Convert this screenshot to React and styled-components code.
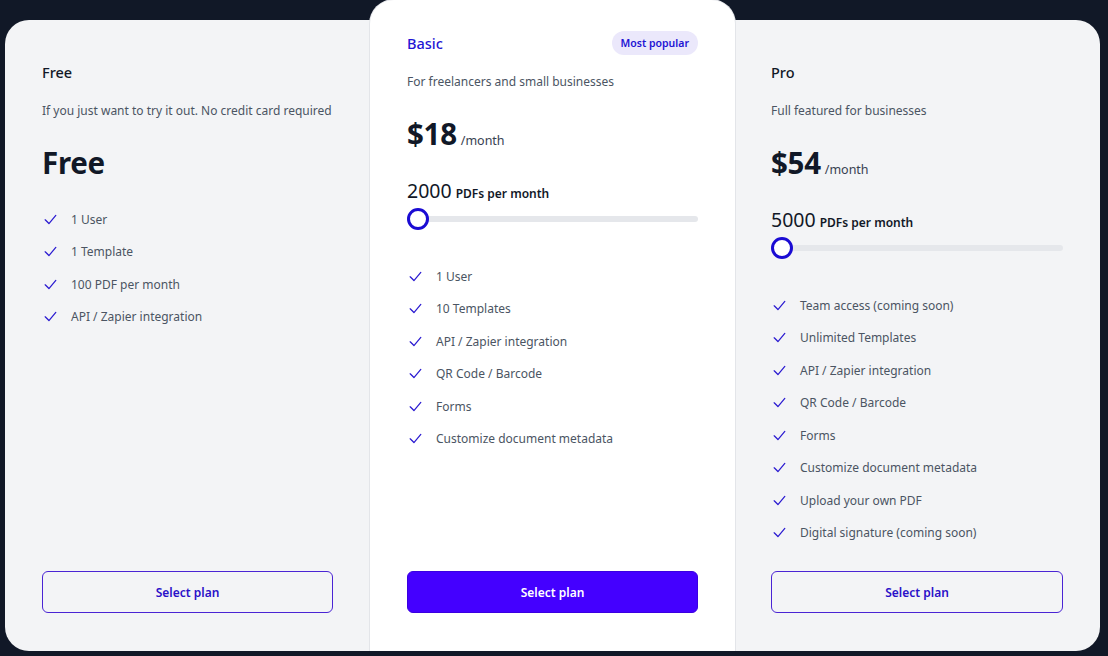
import React from 'react'
import styled, { createGlobalStyle } from 'styled-components'

const GlobalStyle = createGlobalStyle`
  html, body {
    margin: 0;
    padding: 0;
    background: #111827;
  }
  body {
    font-family: "Noto Sans", "Open Sans", sans-serif;
    -webkit-font-smoothing: antialiased;
  }
`

const plans = [
  {
    name: 'Free',
    desc: 'If you just want to try it out. No credit card required',
    price: 'Free',
    features: ['1 User', '1 Template', '100 PDF per month', 'API / Zapier integration'],
  },
  {
    name: 'Basic',
    desc: 'For freelancers and small businesses',
    price: '$18',
    pdfs: 2000,
    popular: true,
    features: [
      '1 User',
      '10 Templates',
      'API / Zapier integration',
      'QR Code / Barcode',
      'Forms',
      'Customize document metadata',
    ],
  },
  {
    name: 'Pro',
    desc: 'Full featured for businesses',
    price: '$54',
    pdfs: 5000,
    features: [
      'Team access (coming soon)',
      'Unlimited Templates',
      'API / Zapier integration',
      'QR Code / Barcode',
      'Forms',
      'Customize document metadata',
      'Upload your own PDF',
      'Digital signature (coming soon)',
    ],
  },
]

const CheckIcon = () => (
  <svg width="15" height="15" viewBox="0 0 24 24" fill="none" stroke="#2b1bd1" strokeWidth="2" strokeLinecap="round" strokeLinejoin="round">
    <path d="M3.5 12.5l6 6 11-13" />
  </svg>
)

const App = () => {
  return (
    <>
      <GlobalStyle />
      <Page>
        {plans.map((plan, i) => (
          <Card key={plan.name} $pos={i}>
            <Header>
              <Title $popular={plan.popular}>{plan.name}</Title>
              {plan.popular && <Badge>Most popular</Badge>}
            </Header>
            <Desc>{plan.desc}</Desc>
            <PriceRow>
              <Price>{plan.price}</Price>
              {plan.pdfs && <Per>/month</Per>}
            </PriceRow>
            {plan.pdfs && (
              <>
                <PdfRow>
                  <PdfCount>{plan.pdfs}</PdfCount>
                  <PdfLabel>PDFs per month</PdfLabel>
                </PdfRow>
                <Slider>
                  <Track />
                  <Thumb />
                </Slider>
              </>
            )}
            <Features $slider={!!plan.pdfs}>
              {plan.features.map((f) => (
                <Feature key={f}>
                  <CheckIcon />
                  <span>{f}</span>
                </Feature>
              ))}
            </Features>
            <SelectButton $primary={plan.popular}>Select plan</SelectButton>
          </Card>
        ))}
      </Page>
    </>
  )
}

const Page = styled.div`
  display: grid;
  grid-template-columns: repeat(3, 365px);
  height: 651px;
  padding-left: 5px;
  box-sizing: border-box;
`

const Card = styled.div`
  display: flex;
  flex-direction: column;
  box-sizing: border-box;
  background: ${({ $pos }) => ($pos === 1 ? '#ffffff' : '#f3f4f6')};
  margin-top: ${({ $pos }) => ($pos === 1 ? '0' : '20px')};
  padding: ${({ $pos }) => ($pos === 1 ? '31px' : '40px')} 37px 38px;
  border-radius: ${({ $pos }) =>
    $pos === 0 ? '24px 0 0 24px' : $pos === 1 ? '24px 24px 0 0' : '0 24px 24px 0'};
  box-shadow: ${({ $pos }) => ($pos === 1 ? '0 0 0 1px #e3e5e9' : 'none')};
  position: relative;
  z-index: ${({ $pos }) => ($pos === 1 ? 1 : 0)};
  ${({ $pos }) => ($pos === 2 ? 'padding-left: 36px;' : '')}
`

const Header = styled.div`
  display: flex;
  align-items: center;
  justify-content: space-between;
  height: 24px;
`

const Title = styled.h3`
  margin: 0;
  font-size: 14.5px;
  line-height: 24px;
  font-weight: 500;
  color: ${({ $popular }) => ($popular ? '#2314d4' : '#111827')};
`

const Badge = styled.span`
  background: #ebe8fb;
  color: #2314d4;
  font-size: 10.5px;
  font-weight: 600;
  line-height: 24px;
  padding: 0 9px;
  border-radius: 999px;
`

const Desc = styled.p`
  margin: 15px 0 0;
  font-size: 12px;
  line-height: 24px;
  color: #4b5563;
  white-space: nowrap;
`

const PriceRow = styled.div`
  margin-top: 20px;
  display: flex;
  align-items: baseline;
  gap: 4px;
  height: 40px;
`

const Price = styled.span`
  font-size: 29.5px;
  line-height: 40px;
  font-weight: 700;
  color: #111827;
  letter-spacing: -0.3px;
`

const Per = styled.span`
  font-size: 12.5px;
  color: #374151;
`

const PdfRow = styled.div`
  margin-top: 23px;
  display: flex;
  align-items: baseline;
  gap: 4px;
  height: 28px;
`

const PdfCount = styled.span`
  font-size: 19.5px;
  line-height: 28px;
  color: #111827;
`

const PdfLabel = styled.span`
  font-size: 12px;
  font-weight: 600;
  color: #111827;
`

const Slider = styled.div`
  margin-top: 3px;
  position: relative;
  height: 22px;
  display: flex;
  align-items: center;
`

const Track = styled.div`
  width: 100%;
  height: 6px;
  border-radius: 3px;
  background: #e5e7eb;
`

const Thumb = styled.div`
  position: absolute;
  left: 0;
  top: 0;
  width: 22px;
  height: 22px;
  box-sizing: border-box;
  border-radius: 50%;
  border: 3px solid #1a0bd3;
  background: #ffffff;
`

const Features = styled.ul`
  list-style: none;
  margin: ${({ $slider }) => ($slider ? '36px' : '26px')} 0 0;
  padding: 0;
  display: flex;
  flex-direction: column;
  gap: 12.5px;
`

const Feature = styled.li`
  display: flex;
  align-items: center;
  gap: 13px;
  height: 20px;
  font-size: 12px;
  color: #4b5563;

  svg {
    flex: none;
    margin-left: 1px;
  }
`

const SelectButton = styled.button`
  margin-top: auto;
  height: 42px;
  width: 100%;
  border-radius: 6px;
  font-family: inherit;
  font-size: 12px;
  font-weight: 600;
  cursor: pointer;
  border: 1px solid ${({ $primary }) => ($primary ? '#3a00e0' : '#4a24d4')};
  background: ${({ $primary }) => ($primary ? '#4400ff' : 'transparent')};
  color: ${({ $primary }) => ($primary ? '#ffffff' : '#2a10c8')};
`

export default App
